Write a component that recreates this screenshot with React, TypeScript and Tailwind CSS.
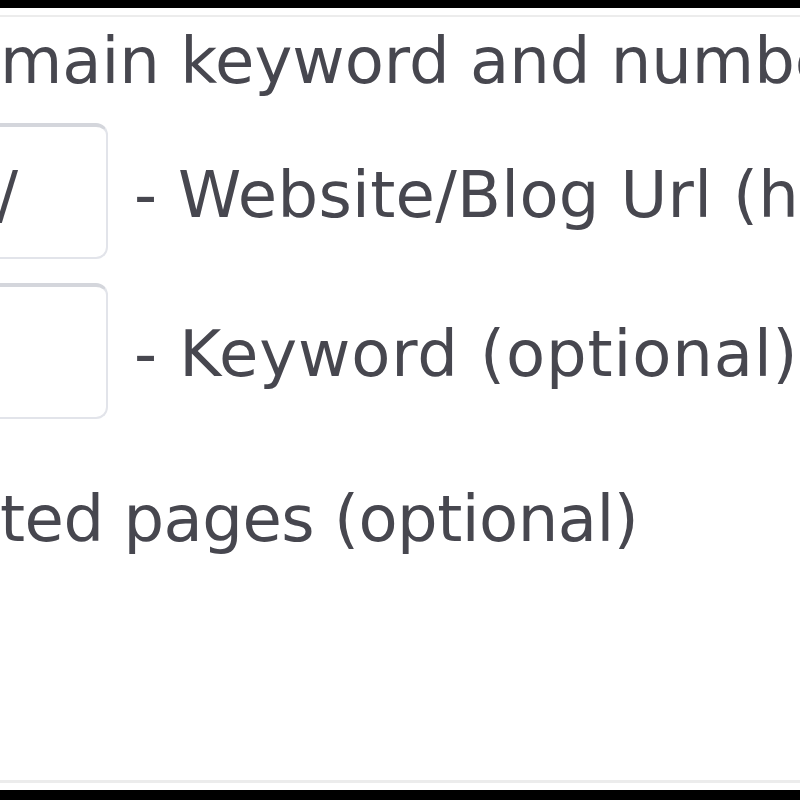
export default function App() {
    return (
        <div className="w-[800px] h-[800px] bg-white flex flex-col overflow-hidden text-[#47474f]" style={{ fontFamily: '"DejaVu Sans", Verdana, sans-serif' }}>
            <div className="h-[8px] bg-black shrink-0" />
            <div className="h-[7px] shrink-0" />
            <div className="flex-1 border-t-2 border-b-[3px] border-[#ececec] flex flex-col">
                <div className="mt-[12px] h-[64px] text-[64px] leading-[64px] whitespace-nowrap">main keyword and number</div>

                <div className="mt-[30px] flex items-center whitespace-nowrap">
                    <div className="ml-[-300px] w-[408px] h-[136px] shrink-0 rounded-[12px] border-2 border-[#e2e4ea] border-t-[4px] border-t-[#d4d6dc] flex items-center justify-end pr-[88px] text-[64px] leading-none pt-[6px]">
                        /
                    </div>
                    <div className="ml-[26px] pt-[8px] text-[64px] leading-none tracking-[0.3px]">- Website/Blog Url (http)</div>
                </div>

                <div className="mt-[24px] flex items-center whitespace-nowrap">
                    <div className="ml-[-300px] w-[408px] h-[136px] shrink-0 rounded-[12px] border-2 border-[#e2e4ea] border-t-[4px] border-t-[#d4d6dc]" />
                    <div className="ml-[26px] pt-[6px] text-[64px] leading-none tracking-[0.9px]">- Keyword (optional)</div>
                </div>

                <div className="mt-[68px] text-[64px] leading-none whitespace-nowrap tracking-[-0.5px]">ted pages (optional)</div>
            </div>
            <div className="h-[7px] shrink-0" />
            <div className="h-[10px] bg-black shrink-0" />
        </div>
    );
}
